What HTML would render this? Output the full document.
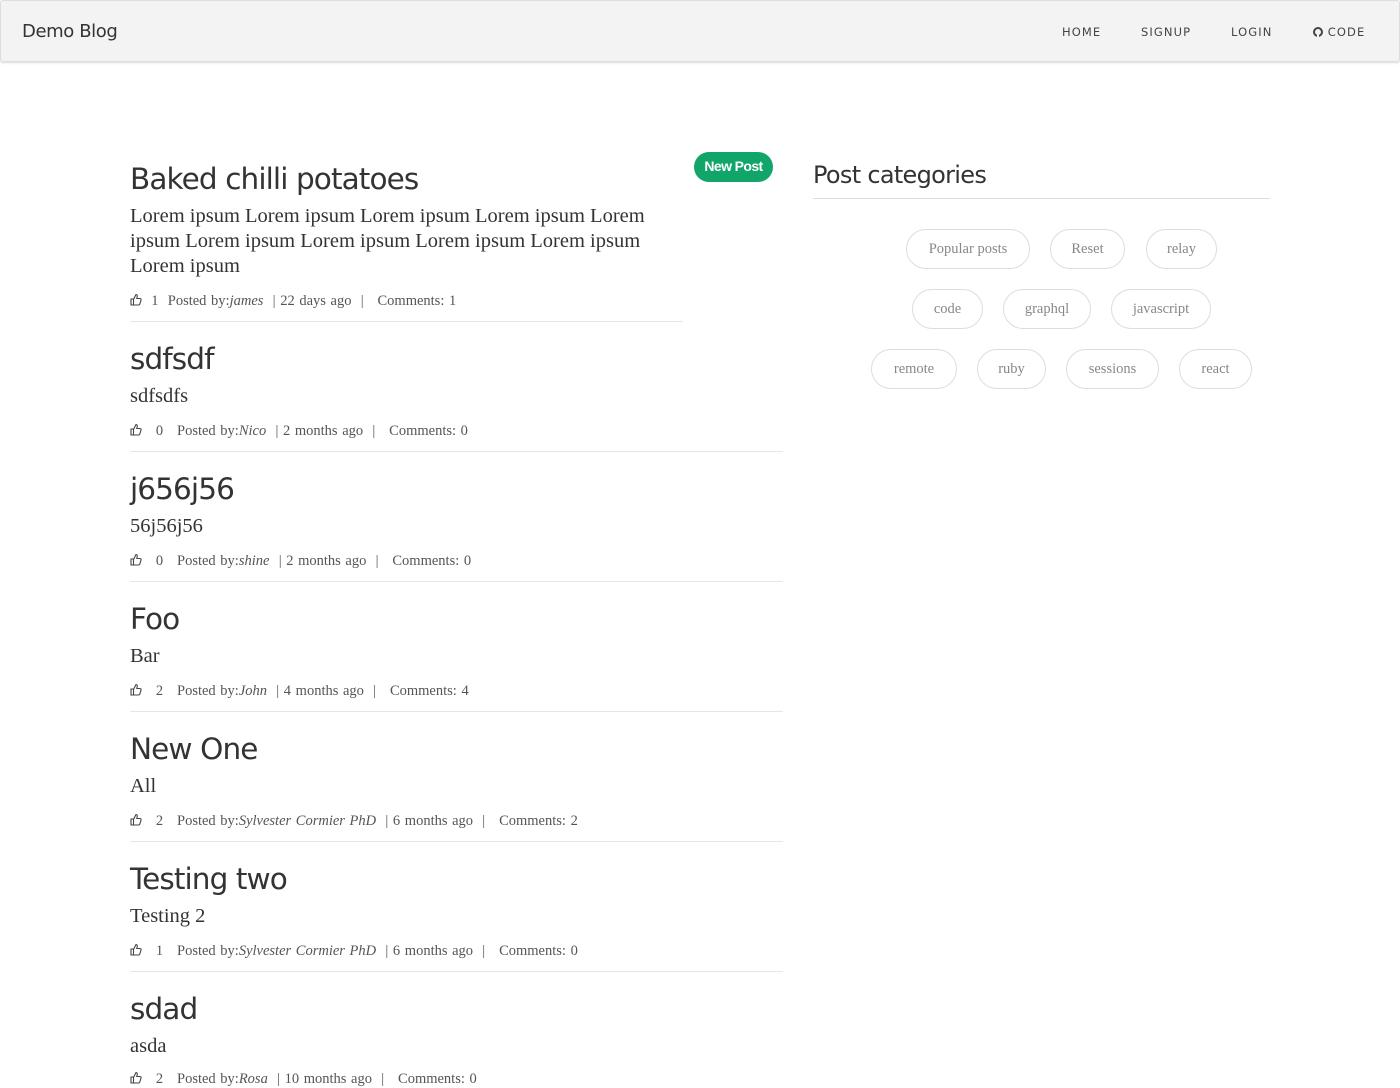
<!DOCTYPE html>
<html><head><meta charset="utf-8"><style>
*{margin:0;padding:0;box-sizing:border-box}
body{width:1400px;height:1080px;overflow:hidden;background:#fff;position:relative;font-family:"Liberation Serif",serif;color:#333}
.nav{position:absolute;left:0;top:0;width:1400px;height:62px;background:#f3f3f3;border:1px solid #ddd;border-radius:3px;box-shadow:0 1px 2px rgba(0,0,0,.15)}
.brand{position:absolute;left:21px;top:20px;font:18px "DejaVu Sans","Liberation Sans",sans-serif;color:#333;letter-spacing:-.4px}
.nl{position:absolute;top:24px;font:11.5px "DejaVu Sans","Liberation Sans",sans-serif;letter-spacing:1.1px;color:#444}
.a{position:absolute;left:130px}
.t{font:29.5px "DejaVu Sans","Liberation Sans",sans-serif;color:#333;letter-spacing:-.9px;white-space:nowrap}
.b{font-size:20.5px;color:#333;line-height:25px}
.m{font-size:14.5px;color:#555;white-space:nowrap;word-spacing:1px}
.m i{font-style:italic}
.hr{position:absolute;left:130px;height:1px;background:#e6e6e6}
.btn{position:absolute;left:694px;top:152px;width:79px;height:30px;background:#12a56a;border-radius:15px;color:#fff;font:bold 14px "Liberation Sans",sans-serif;text-align:center;line-height:29px;letter-spacing:-.6px}
.pill{position:absolute;height:40px;border:1px solid #ddd;border-radius:20px;color:#888;font-size:14.5px;text-align:center;line-height:38px}
svg{vertical-align:-1px}
</style></head><body>
<div class="nav"><div class="brand">Demo Blog</div>
<div class="nl" style="left:1061px">HOME</div><div class="nl" style="left:1140px">SIGNUP</div><div class="nl" style="left:1230px">LOGIN</div>
<div class="nl" style="left:1312px"><svg width="10" height="10" viewBox="0 0 10 10"><circle cx="5" cy="5" r="4" fill="none" stroke="#444" stroke-width="2"/><rect x="4" y="7" width="2" height="3" fill="#f3f3f3"/></svg> CODE</div></div>

<div class="btn">New Post</div>

<div class="a" style="top:162px"><div class="t">Baked chilli potatoes</div></div>
<div class="a b" style="top:204px;width:540px">Lorem ipsum Lorem ipsum Lorem ipsum Lorem ipsum Lorem ipsum Lorem ipsum Lorem ipsum Lorem ipsum Lorem ipsum Lorem ipsum</div>
<div class="a m" style="top:293px"><svg width="12" height="13" viewBox="0 0 12 13"><path d="M1 6h2.5v6H1z M3.5 6.5l2.5-5c1 0 1.5.8 1.2 2L6.8 5.5H10c1 0 1.3.8 1 1.6l-1.2 4c-.3.6-.7.9-1.3.9H3.5" fill="none" stroke="#444" stroke-width="1.1"/></svg>&nbsp; 1 &nbsp;Posted by:<i>james</i> &nbsp;| 22 days ago &nbsp;| &nbsp;&nbsp;Comments: 1</div>
<div class="hr" style="top:321px;width:553px"></div>

<div class="a" style="top:342px"><div class="t">sdfsdf</div></div>
<div class="a b" style="top:384px">sdfsdfs</div>
<div class="a m" style="top:423px"><svg width="12" height="13" viewBox="0 0 12 13"><path d="M1 6h2.5v6H1z M3.5 6.5l2.5-5c1 0 1.5.8 1.2 2L6.8 5.5H10c1 0 1.3.8 1 1.6l-1.2 4c-.3.6-.7.9-1.3.9H3.5" fill="none" stroke="#444" stroke-width="1.1"/></svg>&nbsp;&nbsp; 0 &nbsp;&nbsp;Posted by:<i>Nico</i> &nbsp;| 2 months ago &nbsp;| &nbsp;&nbsp;Comments: 0</div>
<div class="hr" style="top:451px;width:653px"></div>

<div class="a" style="top:472px"><div class="t">j656j56</div></div>
<div class="a b" style="top:514px">56j56j56</div>
<div class="a m" style="top:553px"><svg width="12" height="13" viewBox="0 0 12 13"><path d="M1 6h2.5v6H1z M3.5 6.5l2.5-5c1 0 1.5.8 1.2 2L6.8 5.5H10c1 0 1.3.8 1 1.6l-1.2 4c-.3.6-.7.9-1.3.9H3.5" fill="none" stroke="#444" stroke-width="1.1"/></svg>&nbsp;&nbsp; 0 &nbsp;&nbsp;Posted by:<i>shine</i> &nbsp;| 2 months ago &nbsp;| &nbsp;&nbsp;Comments: 0</div>
<div class="hr" style="top:581px;width:653px"></div>

<div class="a" style="top:602px"><div class="t">Foo</div></div>
<div class="a b" style="top:644px">Bar</div>
<div class="a m" style="top:683px"><svg width="12" height="13" viewBox="0 0 12 13"><path d="M1 6h2.5v6H1z M3.5 6.5l2.5-5c1 0 1.5.8 1.2 2L6.8 5.5H10c1 0 1.3.8 1 1.6l-1.2 4c-.3.6-.7.9-1.3.9H3.5" fill="none" stroke="#444" stroke-width="1.1"/></svg>&nbsp;&nbsp; 2 &nbsp;&nbsp;Posted by:<i>John</i> &nbsp;| 4 months ago &nbsp;| &nbsp;&nbsp;Comments: 4</div>
<div class="hr" style="top:711px;width:653px"></div>

<div class="a" style="top:732px"><div class="t">New One</div></div>
<div class="a b" style="top:774px">All</div>
<div class="a m" style="top:813px"><svg width="12" height="13" viewBox="0 0 12 13"><path d="M1 6h2.5v6H1z M3.5 6.5l2.5-5c1 0 1.5.8 1.2 2L6.8 5.5H10c1 0 1.3.8 1 1.6l-1.2 4c-.3.6-.7.9-1.3.9H3.5" fill="none" stroke="#444" stroke-width="1.1"/></svg>&nbsp;&nbsp; 2 &nbsp;&nbsp;Posted by:<i>Sylvester Cormier PhD</i> &nbsp;| 6 months ago &nbsp;| &nbsp;&nbsp;Comments: 2</div>
<div class="hr" style="top:841px;width:653px"></div>

<div class="a" style="top:862px"><div class="t">Testing two</div></div>
<div class="a b" style="top:904px">Testing 2</div>
<div class="a m" style="top:943px"><svg width="12" height="13" viewBox="0 0 12 13"><path d="M1 6h2.5v6H1z M3.5 6.5l2.5-5c1 0 1.5.8 1.2 2L6.8 5.5H10c1 0 1.3.8 1 1.6l-1.2 4c-.3.6-.7.9-1.3.9H3.5" fill="none" stroke="#444" stroke-width="1.1"/></svg>&nbsp;&nbsp; 1 &nbsp;&nbsp;Posted by:<i>Sylvester Cormier PhD</i> &nbsp;| 6 months ago &nbsp;| &nbsp;&nbsp;Comments: 0</div>
<div class="hr" style="top:971px;width:653px"></div>

<div class="a" style="top:992px"><div class="t">sdad</div></div>
<div class="a b" style="top:1034px">asda</div>
<div class="a m" style="top:1071px"><svg width="12" height="13" viewBox="0 0 12 13"><path d="M1 6h2.5v6H1z M3.5 6.5l2.5-5c1 0 1.5.8 1.2 2L6.8 5.5H10c1 0 1.3.8 1 1.6l-1.2 4c-.3.6-.7.9-1.3.9H3.5" fill="none" stroke="#444" stroke-width="1.1"/></svg>&nbsp;&nbsp; 2 &nbsp;&nbsp;Posted by:<i>Rosa</i> &nbsp;| 10 months ago &nbsp;| &nbsp;&nbsp;Comments: 0</div>

<div style="position:absolute;left:813px;top:161px;font:24px 'DejaVu Sans','Liberation Sans',sans-serif;letter-spacing:-.7px;color:#333">Post categories</div>
<div style="position:absolute;left:813px;top:198px;width:457px;height:1px;background:#ddd"></div>

<div class="pill" style="left:906px;top:229px;width:124px">Popular posts</div>
<div class="pill" style="left:1050px;top:229px;width:75px">Reset</div>
<div class="pill" style="left:1146px;top:229px;width:71px">relay</div>
<div class="pill" style="left:912px;top:289px;width:71px">code</div>
<div class="pill" style="left:1003px;top:289px;width:88px">graphql</div>
<div class="pill" style="left:1111px;top:289px;width:100px">javascript</div>
<div class="pill" style="left:871px;top:349px;width:86px">remote</div>
<div class="pill" style="left:977px;top:349px;width:69px">ruby</div>
<div class="pill" style="left:1066px;top:349px;width:93px">sessions</div>
<div class="pill" style="left:1179px;top:349px;width:73px">react</div>
</body></html>
